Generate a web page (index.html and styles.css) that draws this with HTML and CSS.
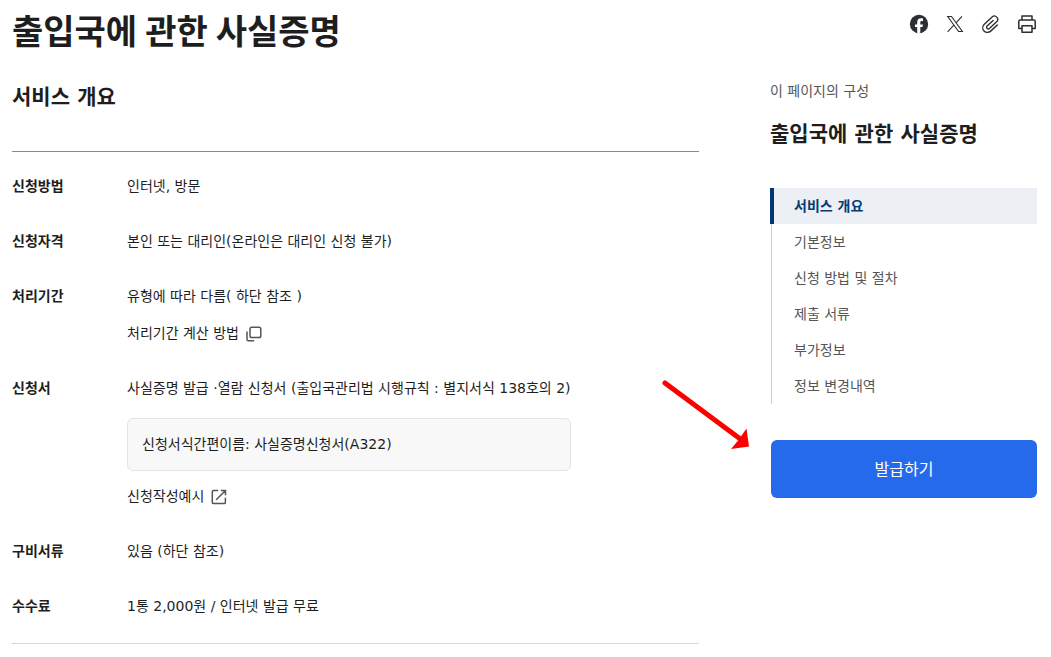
FILE: index.html
```html
<!DOCTYPE html>
<html lang="ko">
<head>
<meta charset="utf-8">
<meta name="viewport" content="width=device-width, initial-scale=1">
<title>출입국에 관한 사실증명</title>
<link rel="stylesheet" href="styles.css">
</head>
<body>
<header class="page-header">
  <h1 class="page-title">출입국에 관한 사실증명</h1>
  <div class="share">
    <button class="icon-button" type="button" aria-label="페이스북">
      <svg width="20" height="20" viewBox="0 0 20 20"><circle cx="10" cy="10" r="9.2" fill="#2b2f33"/><path d="M8.2 19.5v-6.4H6v-2.7h2.2V8.2c0-2.6 1.5-4 3.9-4 .8 0 1.600.1 1.900.2v2.600h-1.200c-1.200 0-1.500.6-1.500 1.400v2h2.700l-.5 2.700h-2.200v6.400z" fill="#fff"/></svg>
    </button>
    <button class="icon-button" type="button" aria-label="X">
      <svg width="20" height="20" viewBox="0 0 20 20" fill="none" stroke="#2b2f33" stroke-width="1.1"><path d="M2.700 2.500h3.800l10.900 15h-3.800zM17 2.300l-6 6.500M8.800 11.100l-6.200 6.700"/></svg>
    </button>
    <button class="icon-button" type="button" aria-label="링크 복사">
      <svg width="20" height="20" viewBox="0 0 20 20" fill="none" stroke="#2b2f33" stroke-width="1.400" stroke-linecap="round"><path transform="rotate(-43 10 10)" d="M14 15H4.900a4.700 4.700 0 0 1 0-9.400H15.600a3.300 3.300 0 0 1 0 6.600H5.800a1.700 1.700 0 0 1 0-3.400H14"/></svg>
    </button>
    <button class="icon-button" type="button" aria-label="인쇄">
      <svg width="20" height="20" viewBox="0 0 20 20" fill="none" stroke="#2b2f33" stroke-width="1.500" stroke-linejoin="round"><path d="M5 6V2h10v4M5 14.500H1.800V7.400q0-1.300 1.300-1.300h13.800q1.300 0 1.300 1.300v7.100H15M5 11.800h10v6.400H5z"/></svg>
    </button>
  </div>
</header>
<div class="layout">
  <main class="content">
    <h2 class="section-title">서비스 개요</h2>
    <dl class="details">
      <div class="row"><dt class="label">신청방법</dt><dd class="value">인터넷, 방문</dd></div>
      <div class="row"><dt class="label">신청자격</dt><dd class="value">본인 또는 대리인(온라인은 대리인 신청 불가)</dd></div>
      <div class="row">
        <dt class="label">처리기간</dt>
        <dd class="value">
          <span>유형에 따라 다름( 하단 참조 )</span>
          <a class="link" href="#period">처리기간 계산 방법
            <svg width="16" height="16" viewBox="0 0 16 16" fill="none" stroke="#555" stroke-width="1.500" stroke-linecap="round"><rect x="4" y="1.200" width="10.800" height="10.400" rx="1.800"/><path d="M1 6v7.400q0 1.400 1.400 1.400h5.200"/></svg>
          </a>
        </dd>
      </div>
      <div class="row">
        <dt class="label">신청서</dt>
        <dd class="value">
          <span>사실증명 발급 ·열람 신청서 (출입국관리법 시행규칙 : 별지서식 138호의 2)</span>
          <p class="note">신청서식간편이름: 사실증명신청서(A322)</p>
          <a class="link" href="#example">신청작성예시
            <svg width="16" height="16" viewBox="0 0 16 16" fill="none" stroke="#555" stroke-width="1.500"><path d="M7.200 1.500H2.500q-1.200 0-1.200 1.200v10.700q0 1.200 1.200 1.200h10.700q1.200 0 1.200-1.200V8.800M9.800 1.500h4.700v4.700M14.300 1.700l-9.100 9.100"/></svg>
          </a>
        </dd>
      </div>
      <div class="row"><dt class="label">구비서류</dt><dd class="value">있음 (하단 참조)</dd></div>
      <div class="row"><dt class="label">수수료</dt><dd class="value">1통 2,000원 / 인터넷 발급 무료</dd></div>
    </dl>
  </main>
  <aside class="sidebar">
    <p class="sidebar-caption">이 페이지의 구성</p>
    <h2 class="sidebar-title">출입국에 관한 사실증명</h2>
    <nav class="toc">
      <a class="toc-link active" href="#overview">서비스 개요</a>
      <a class="toc-link" href="#basic">기본정보</a>
      <a class="toc-link" href="#process">신청 방법 및 절차</a>
      <a class="toc-link" href="#documents">제출 서류</a>
      <a class="toc-link" href="#extra">부가정보</a>
      <a class="toc-link" href="#history">정보 변경내역</a>
    </nav>
    <div class="action">
      <svg class="arrow" width="90" height="72" viewBox="0 0 90 72"><path d="M5 5l78 58" stroke="#f00" stroke-width="5" stroke-linecap="round"/><path d="M86.500 50.500L89 68.500 71 71 78.500 62z" fill="#f00"/></svg>
      <button class="issue-button" type="button">발급하기</button>
    </div>
  </aside>
</div>
</body>
</html>
```

FILE: styles.css
```css
* {
  box-sizing: border-box;
}

body {
  margin: 0;
  padding: 8px 14px 12px 12px;
  background: #fff;
  color: #1e1e1e;
  font-family: "DejaVu Sans", "Noto Sans CJK KR", sans-serif;
  font-size: 14px;
  line-height: 23px;
}

h1, h2, p, dl, dd {
  margin: 0;
}

a {
  color: inherit;
  text-decoration: none;
}

.page-header {
  display: flex;
  justify-content: space-between;
  align-items: flex-start;
}

.page-title {
  font-family: Inter, "Noto Sans CJK KR", sans-serif;
  font-size: 34px;
  line-height: 48px;
  font-weight: 700;
}

.share {
  display: flex;
  gap: 16px;
  padding-top: 6px;
}

.icon-button {
  display: flex;
  padding: 0;
  border: 0;
  background: none;
  cursor: pointer;
}

.layout {
  display: flex;
  gap: 71px;
}

.content {
  flex: 1;
  min-width: 0;
  padding-top: 26px;
}

.section-title {
  font-size: 21px;
  line-height: 30px;
  font-weight: 700;
}

.details {
  margin-top: 39px;
  padding: 7px 0 9px;
  border-top: 1px solid #8a8c8e;
  border-bottom: 1px solid #d4d6d8;
}

.row {
  display: flex;
  padding: 16px 0;
}

.label {
  flex: 0 0 115px;
  font-weight: 700;
}

.value {
  display: flex;
  flex-direction: column;
  align-items: flex-start;
  gap: 14px;
}

.link {
  display: flex;
  align-items: center;
  gap: 7px;
}

.note {
  align-self: stretch;
  margin-top: 4px;
  padding: 14px;
  border: 1px solid #e4e4e4;
  border-radius: 6px;
  background: #f8f8f8;
}

.sidebar {
  flex: 0 0 267px;
  padding-top: 24px;
}

.sidebar-caption {
  color: #555;
}

.sidebar-title {
  margin-top: 15px;
  font-size: 21px;
  line-height: 32px;
  font-weight: 700;
  white-space: nowrap;
}

.toc {
  display: flex;
  flex-direction: column;
  margin-top: 38px;
}

.toc-link {
  margin-left: 1px;
  padding: 6px 22px;
  border-left: 1px solid #cdd1d5;
  line-height: 24px;
  color: #555;
}

.toc-link.active {
  margin-left: 0;
  padding-left: 20px;
  border-left: 4px solid #003675;
  background: #eceff4;
  color: #063a74;
  font-weight: 700;
}

.action {
  position: relative;
  margin: 36px 0 0 1px;
}

.arrow {
  position: absolute;
  left: -111px;
  top: -62px;
}

.issue-button {
  width: 100%;
  height: 58px;
  border: 0;
  border-radius: 6px;
  background: #256aeb;
  color: #fff;
  font: inherit;
  font-size: 16px;
  cursor: pointer;
}
```
